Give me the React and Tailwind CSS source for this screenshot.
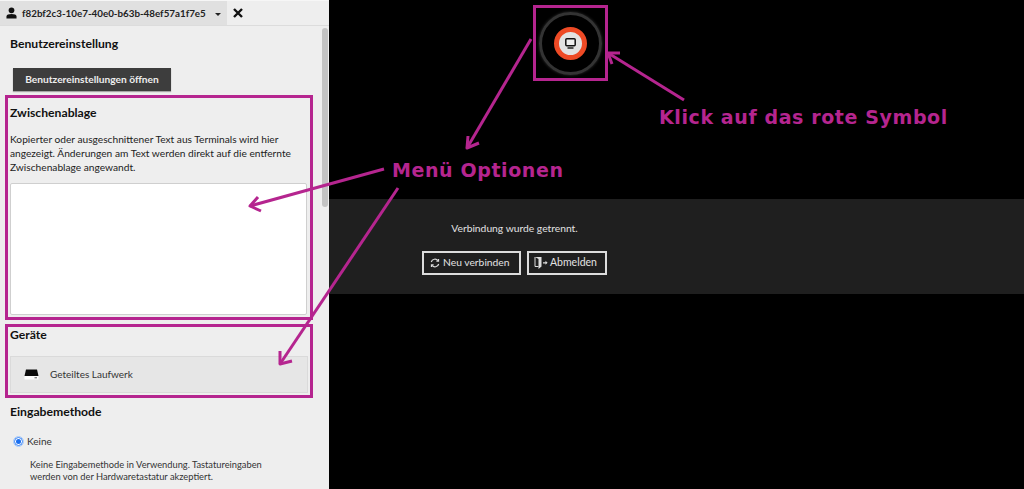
import React from "react";

const PINK = "#b5258f";

function UserIcon() {
  return (
    <svg width="11" height="12" viewBox="0 0 12 13" className="shrink-0">
      <circle cx="6" cy="3.6" r="3.1" fill="#111" />
      <path d="M0.5 12.5 V10.2 C0.5 8.4 3 7.6 6 7.6 C9 7.6 11.5 8.4 11.5 10.2 V12.5 Z" fill="#111" />
    </svg>
  );
}

function DriveIcon() {
  return (
    <svg width="15" height="11" viewBox="0 0 15 11" className="shrink-0">
      <path d="M2 0.5 H13 L14.5 7 H0.5 Z" fill="#0c0c0c" />
      <rect x="0.5" y="7" width="14" height="3.6" rx="0.6" fill="#fff" />
      <rect x="10.5" y="8" width="2.5" height="1.4" fill="#888" />
    </svg>
  );
}

function ReconnectIcon() {
  return (
    <svg width="10" height="10" viewBox="0 0 11 11" fill="none" stroke="#ddd" strokeWidth="1.3" className="shrink-0">
      <path d="M1.4 4.4 A4.2 4.2 0 0 1 8.8 3" />
      <path d="M9.6 6.6 A4.2 4.2 0 0 1 2.2 8" />
      <path d="M9.4 1 V3.4 H7" />
      <path d="M1.6 10 V7.6 H4" />
    </svg>
  );
}

function LogoutIcon() {
  return (
    <svg width="14" height="14" viewBox="0 0 14 14" className="shrink-0">
      <path d="M1 1 H7.5 V10.5 L4.5 13 V3 Z" fill="#ddd" />
      <path d="M1 1 V10.5 H4.5" fill="none" stroke="#ddd" strokeWidth="1" />
      <path d="M9 6.2 H11.5 V4.8 L13.6 6.8 L11.5 8.8 V7.4 H9 Z" fill="#ddd" />
    </svg>
  );
}

function Heading({ children, className = "" }) {
  return <h3 className={`text-[12.2px] font-bold leading-[17px] text-[#111] ${className}`}>{children}</h3>;
}

function Sidebar() {
  return (
    <div className="w-[329px] h-[489px] shrink-0 overflow-hidden bg-[#eeeeee] flex flex-col">
      <div className="h-[26px] shrink-0 flex items-center border-t border-b border-t-[#f6f6f6] border-b-[#dcdcdc]">
        <div className="w-[227px] h-full flex items-center bg-[#e0e0e0] pl-[6px]">
          <UserIcon />
          <span className="ml-[5px] text-[9.8px] font-bold text-[#222] whitespace-nowrap">f82bf2c3-10e7-40e0-b63b-48ef57a1f7e5</span>
          <span className="ml-[9px] mt-[2px] w-0 h-0 border-x-[3px] border-x-transparent border-t-[3px] border-t-[#222]"></span>
        </div>
        <svg width="10" height="10" viewBox="0 0 10 10" className="ml-[6px]">
          <path d="M1 1 L9 9 M9 1 L1 9" stroke="#111" strokeWidth="2.4" />
        </svg>
      </div>

      <div className="flex flex-1 min-h-0">
        <div className="w-[320px] pl-[10px] pr-[12px] pt-[9px]">
          <Heading>Benutzereinstellung</Heading>
          <button className="block mt-[16px] ml-[3px] w-[158px] h-[23px] bg-[#3d3d3d] text-[#eee] text-[10.2px] font-bold shadow-[0_1px_1px_rgba(0,0,0,0.3)]">
            Benutzereinstellungen öffnen
          </button>

          <Heading className="mt-[13px]">Zwischenablage</Heading>
          <p className="mt-[11px] text-[10.2px] leading-[14px] text-[#222] w-[296px]">
            Kopierter oder ausgeschnittener Text aus Terminals wird hier angezeigt. Änderungen am Text werden direkt auf die entfernte Zwischenablage angewandt.
          </p>
          <div className="mt-[9px] h-[132px] w-[297px] bg-white border border-[#cfcfcf] rounded-[2px]"></div>

          <Heading className="mt-[11px]">Geräte</Heading>
          <div className="mt-[13px] h-[37px] w-[298px] flex items-center bg-[#e6e6e6] border border-[#dadada] pl-[13px]">
            <DriveIcon />
            <span className="ml-[11px] text-[10px] text-[#333]">Geteiltes Laufwerk</span>
          </div>

          <Heading className="mt-[10px]">Eingabemethode</Heading>
          <div className="mt-[14px] h-[14px] flex items-center pl-[4px]">
            <span className="w-[9px] h-[9px] rounded-full bg-white border border-[#2f7df6] flex items-center justify-center outline-[1px] outline-[#a9ccfa]">
              <span className="w-[5px] h-[5px] rounded-full bg-[#1a6ff0]"></span>
            </span>
            <span className="ml-[4px] text-[10px] text-[#333]">Keine</span>
          </div>
          <p className="mt-[11px] ml-[20px] w-[240px] text-[9.3px] leading-[12px] text-[#333]">
            Keine Eingabemethode in Verwendung. Tastatureingaben werden von der Hardwaretastatur akzeptiert.
          </p>
        </div>
        <div className="w-[9px] pt-[2px] flex">
          <div className="ml-[2px] w-[6px] h-[179px] rounded-[3px] bg-[#c3c3c3]"></div>
        </div>
      </div>
    </div>
  );
}

function Disconnected() {
  return (
    <div className="flex-1 h-[489px] bg-black pt-[199px]">
      <div className="h-[95px] bg-[#1f1f1f] pt-[22px] pl-[93px]">
        <div className="w-[185px]">
          <p className="text-[10.3px] leading-[14px] text-center text-[#e2e2e2]">Verbindung wurde getrennt.</p>
          <div className="mt-[16px] flex gap-[6px]">
            <button className="w-[99px] h-[24px] flex items-center pl-[6px] gap-[3px] border-2 border-[#dcdcdc] text-[10.3px] text-[#e2e2e2]">
              <ReconnectIcon />
              Neu verbinden
            </button>
            <button className="w-[80px] h-[24px] flex items-center pl-[5px] gap-[2px] border-2 border-[#dcdcdc] text-[10.5px] text-[#e2e2e2]">
              <LogoutIcon />
              Abmelden
            </button>
          </div>
        </div>
      </div>
    </div>
  );
}

function Arrow({ d }) {
  return <path d={d} fill="none" stroke={PINK} strokeWidth="3" strokeLinecap="butt" strokeLinejoin="round" />;
}

// annotations lying over the screenshot
function Annotations() {
  return (
    <>
      <div className="absolute left-[5px] top-[95px] w-[308px] h-[225px] border-[3px] border-[#b5258f]"></div>
      <div className="absolute left-[5px] top-[324px] w-[308px] h-[74px] border-[3px] border-[#b5258f]"></div>

      <div className="absolute left-[533px] top-[5px] w-[75px] h-[76px] border-[3px] border-[#b5258f] flex items-center justify-center">
        <div className="w-[63px] h-[63px] rounded-full border-[3px] border-[#333333] flex items-center justify-center shadow-[0_0_3px_rgba(255,255,255,0.2)]">
          <div className="w-[33px] h-[33px] rounded-full bg-[#e2e2e2] border-[5px] border-[#ee4a25] flex items-center justify-center">
            <svg width="11" height="11" viewBox="0 0 11 11">
              <rect x="0.8" y="0.8" width="9.4" height="7" rx="1" fill="#eee" stroke="#111" strokeWidth="1.5" />
              <path d="M2.5 10 H8.5" stroke="#111" strokeWidth="1.4" />
            </svg>
          </div>
        </div>
      </div>

      <svg className="absolute left-0 top-0 pointer-events-none" width="1024" height="489" viewBox="0 0 1024 489">
        <Arrow d="M531 39 L467 148" />
        <Arrow d="M468 136 L467 148 L479 143" />
        <Arrow d="M684 100 L608 53" />
        <Arrow d="M612 64 L608 53 L620 53" />
        <Arrow d="M384 169 L250 206" />
        <Arrow d="M261 211 L250 206 L258 197" />
        <Arrow d="M398 188 L280 364" />
        <Arrow d="M292 361 L280 364 L280 351" />
      </svg>

      <span className="absolute left-[392px] top-[157px] text-[19px] leading-[26px] font-bold tracking-[0.6px] text-[#b5258f] font-['DejaVu_Sans',sans-serif] whitespace-nowrap">
        Menü Optionen
      </span>
      <span className="absolute left-[659px] top-[104px] text-[19px] leading-[26px] font-bold tracking-[0.6px] text-[#b5258f] font-['DejaVu_Sans',sans-serif] whitespace-nowrap">
        Klick auf das rote Symbol
      </span>
    </>
  );
}

export default function App() {
  return (
    <div className="relative w-[1024px] h-[489px] overflow-hidden flex font-['Lato',sans-serif]">
      <Sidebar />
      <Disconnected />
      <Annotations />
    </div>
  );
}
